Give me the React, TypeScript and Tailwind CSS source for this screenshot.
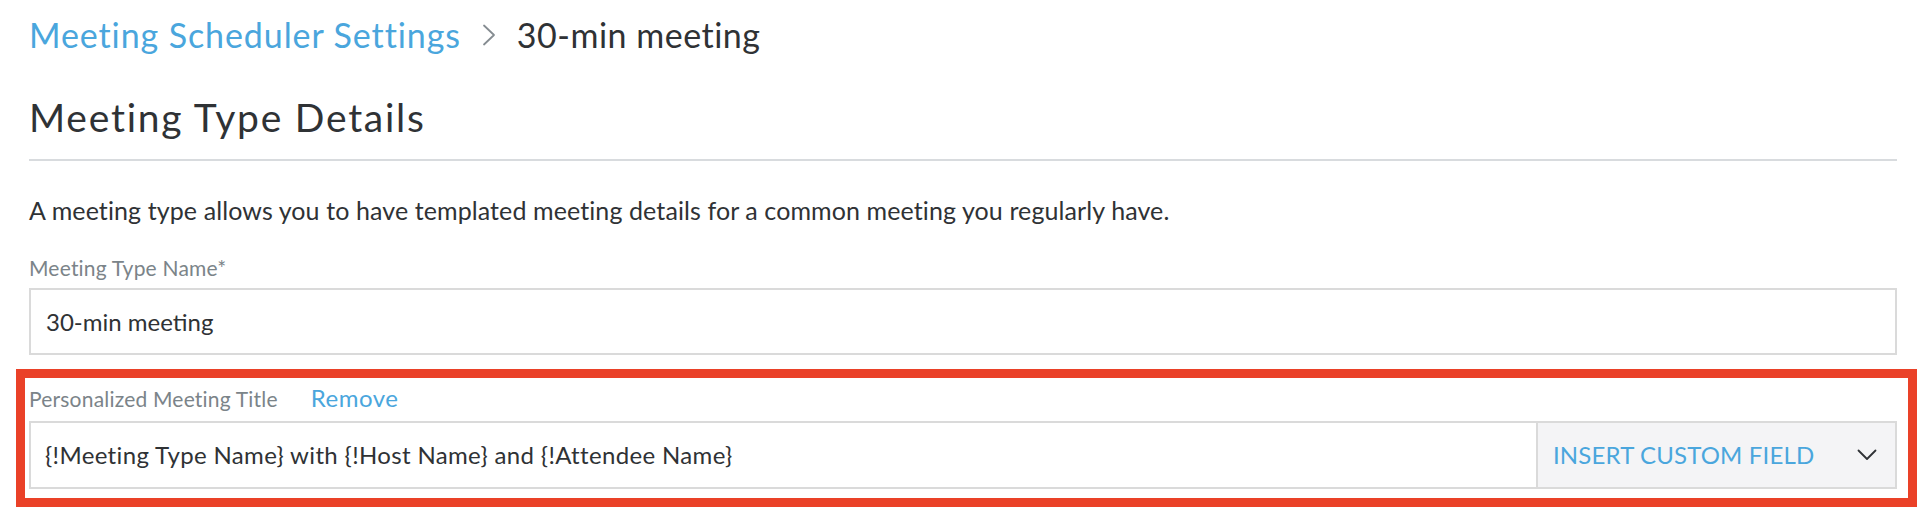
import React from "react";

function Chevron() {
  return (
    <svg width="20" height="12" viewBox="0 0 20 12" fill="none" className="shrink-0">
      <polyline points="1.5,1.5 10,10 18.5,1.5" stroke="#2f3235" strokeWidth="1.8" strokeLinecap="round" strokeLinejoin="round" />
    </svg>
  );
}

function Separator() {
  return (
    <svg width="14" height="22" viewBox="0 0 14 22" fill="none" className="mx-[21px] shrink-0 self-center">
      <polyline points="2,1.5 12,11 2,20.5" stroke="#858c91" strokeWidth="1.8" strokeLinecap="round" strokeLinejoin="round" />
    </svg>
  );
}

export default function App() {
  const font = { fontFamily: "Lato, 'Open Sans', sans-serif" };
  return (
    <div className="min-h-[515px] bg-white pl-[29px] pr-[23px] text-[#2f3235]" style={font}>
      {/* breadcrumb */}
      <div className="flex items-baseline pt-[15px] text-[34px] leading-[40px]">
        <a className="tracking-[0.9px] text-[#4aa6dd]">Meeting Scheduler Settings</a>
        <Separator />
        <span className="tracking-[0.5px]">30-min meeting</span>
      </div>

      <h1 className="mt-[38px] border-b-2 border-[#d8dbde] pb-[18px] text-[39px] leading-[48px] font-normal tracking-[1.75px]">
        Meeting Type Details
      </h1>

      <p className="mt-[33px] text-[25px] leading-[32px] tracking-[0.1px]">
        A meeting type allows you to have templated meeting details for a common meeting you regularly have.
      </p>

      <div className="mt-[28px]">
        <label className="block text-[21px] leading-[28px] tracking-[0.2px] text-[#7b8489]">Meeting Type Name*</label>
        <div className="mt-[6px] flex h-[67px] items-center border-2 border-[#dadada] px-[15px] text-[24px]">
          30-min meeting
        </div>
      </div>

      <div className="mt-[14px] ml-[-13px] mr-[-20px] border-[9px] border-[#ea4128] pl-[4px] pr-[11px] pt-[6px] pb-[9px]">
        <div className="flex items-baseline gap-[33px] leading-[28px]">
          <span className="text-[21px] tracking-[0.2px] text-[#7b8489]">Personalized Meeting Title</span>
          <button className="text-[24px] tracking-[0.5px] text-[#4aa6dd]">Remove</button>
        </div>
        <div className="mt-[8px] flex h-[68px] border-2 border-[#dadada]">
          <div className="flex flex-1 items-center px-[14px] text-[24px] tracking-[0.35px]">
            {"{!Meeting Type Name} with {!Host Name} and {!Attendee Name}"}
          </div>
          <div className="flex w-[359px] items-center justify-between border-l-2 border-[#dadada] bg-[#f4f4f6] pl-[15px] pr-[18px]">
            <span className="text-[24px] uppercase tracking-[0.15px] text-[#4aa6dd]">Insert Custom Field</span>
            <Chevron />
          </div>
        </div>
      </div>
    </div>
  );
}
